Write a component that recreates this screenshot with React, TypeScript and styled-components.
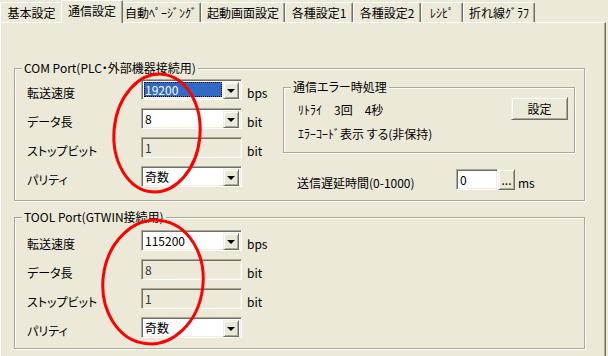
import styled, { createGlobalStyle } from "styled-components";

const face = "#ECE9D8";
const shadow = "#ACA899";
const dark = "#716F64";
const light = "#F1EFE2";

const GlobalStyle = createGlobalStyle`
    html, body {
        margin: 0;
        padding: 0;
        background: ${face};
    }
    body {
        font-family: "Noto Sans CJK JP", "Noto Sans", sans-serif;
        font-size: 12px;
        color: #000;
    }
`;

const Window = styled.div`
    position: relative;
    width: 608px;
    height: 356px;
    overflow: hidden;
    background: ${face};
    font-feature-settings: "palt";
    line-height: 14px;
`;

const TabStrip = styled.div`
    position: relative;
    z-index: 1;
    display: flex;
    align-items: flex-end;
    height: 22px;
`;

const Tab = styled.div<{ $w: number; $active?: boolean }>`
    box-sizing: border-box;
    display: flex;
    align-items: center;
    justify-content: center;
    width: ${p => (p.$active ? p.$w + 4 : p.$w)}px;
    height: ${p => (p.$active ? 23 : 20)}px;
    margin: 0 ${p => (p.$active ? -2 : 0)}px ${p => (p.$active ? -1 : 0)}px;
    padding-bottom: ${p => (p.$active ? 2 : 0)}px;
    background: ${face};
    border-left: 1px solid #fff;
    border-top: 1px solid #fff;
    border-right: 1px solid ${dark};
    border-radius: 2px 2px 0 0;
    box-shadow: inset -1px 0 0 ${shadow};
    white-space: nowrap;
    position: relative;
    z-index: ${p => (p.$active ? 2 : 1)};
`;

const Panel = styled.div`
    box-sizing: border-box;
    width: 606px;
    height: 400px;
    border-top: 1px solid #fff;
    border-left: 1px solid #fff;
    border-right: 1px solid ${dark};
    box-shadow: inset -1px 0 0 ${shadow};
    padding: 45px 0 0 13px;
`;

const Group = styled.div<{ $w: number; $pt: number; $pl: number; $pr?: number; $pb: number }>`
    position: relative;
    box-sizing: border-box;
    width: ${p => p.$w}px;
    border: 1px solid ${shadow};
    box-shadow: inset 1px 1px 0 #fff, 1px 1px 0 #fff;
    padding: ${p => p.$pt}px ${p => p.$pr ?? 0}px ${p => p.$pb}px ${p => p.$pl}px;
    & + & {
        margin-top: 16px;
    }
`;

const Legend = styled.span`
    position: absolute;
    top: -8px;
    left: 7px;
    padding: 0 2px;
    background: ${face};
    white-space: nowrap;
`;

const GroupBody = styled.div`
    display: flex;
`;

const Rows = styled.div`
    display: flex;
    flex-direction: column;
    gap: 8px;
    width: 256px;
`;

const Row = styled.div`
    display: flex;
    align-items: center;
    height: 21px;
`;

const Label = styled.span<{ $w: number }>`
    width: ${p => p.$w}px;
    padding-top: 6px;
    white-space: nowrap;
`;

const Unit = styled.span<{ $gap?: number }>`
    margin-left: ${p => p.$gap ?? 5}px;
    padding-top: 6px;
`;

const Sunken = styled.div<{ $w: number; $disabled?: boolean }>`
    box-sizing: border-box;
    display: flex;
    align-items: stretch;
    width: ${p => p.$w}px;
    height: 21px;
    padding: 2px;
    background: ${p => (p.$disabled ? face : "#fff")};
    color: ${p => (p.$disabled ? "#333" : "#000")};
    border: 1px solid;
    border-color: ${shadow} #fff #fff ${shadow};
    box-shadow: inset 1px 1px 0 ${dark}, inset -1px -1px 0 ${light};
`;

const Value = styled.span<{ $selected?: boolean }>`
    flex: 1;
    display: flex;
    align-items: center;
    padding-left: 1px;
    margin-right: 1px;
    background: ${p => (p.$selected ? "#316AC5" : "transparent")};
    color: ${p => (p.$selected ? "#fff" : "inherit")};
    outline: ${p => (p.$selected ? "1px dotted #000" : "none")};
    outline-offset: -1px;
`;

const RaisedButton = styled.div<{ $w: number; $h: number }>`
    box-sizing: border-box;
    display: flex;
    align-items: center;
    justify-content: center;
    width: ${p => p.$w}px;
    height: ${p => p.$h}px;
    background: ${face};
    border: 1px solid;
    border-color: ${light} ${dark} ${dark} ${light};
    box-shadow: inset 1px 1px 0 #fff, inset -1px -1px 0 ${shadow};
    flex-shrink: 0;
`;

const Arrow = styled.span`
    width: 0;
    height: 0;
    border-left: 4px solid transparent;
    border-right: 4px solid transparent;
    border-top: 4px solid #000;
    margin-top: 1px;
`;

const RightCol = styled.div`
    display: flex;
    flex-direction: column;
    padding-top: 8px;
`;

const ErrorGrid = styled.div`
    display: grid;
    grid-template-columns: 1fr auto;
    grid-template-rows: 23px 14px;
    row-gap: 7px;
`;

const InfoText = styled.span<{ $dy?: number }>`
    padding-top: ${p => p.$dy ?? 0}px;
    white-space: nowrap;
    align-self: ${p => (p.$dy ? "center" : "start")};
`;

const DelayRow = styled.div`
    display: flex;
    align-items: center;
    height: 21px;
    margin-top: 16px;
    padding-left: 14px;
`;

const Overlay = styled.svg`
    position: absolute;
    left: 0;
    top: 0;
    z-index: 5;
    pointer-events: none;
`;

type Field = { label: string; value: string; kind: "combo" | "disabled"; unit: string; selected?: boolean };

const comFields: Field[] = [
    { label: "転送速度", value: "19200", kind: "combo", unit: "bps", selected: true },
    { label: "データ長", value: "8", kind: "combo", unit: "bit" },
    { label: "ストップビット", value: "1", kind: "disabled", unit: "bit" },
    { label: "パリティ", value: "奇数", kind: "combo", unit: "" },
];

const toolFields: Field[] = [
    { label: "転送速度", value: "115200", kind: "combo", unit: "bps" },
    { label: "データ長", value: "8", kind: "disabled", unit: "bit" },
    { label: "ストップビット", value: "1", kind: "disabled", unit: "bit" },
    { label: "パリティ", value: "奇数", kind: "combo", unit: "" },
];

const tabs = [
    { name: "基本設定", w: 63 },
    { name: "通信設定", w: 58, active: true },
    { name: "自動ﾍﾟｰｼﾞﾝｸﾞ", w: 80 },
    { name: "起動画面設定", w: 84 },
    { name: "各種設定1", w: 68 },
    { name: "各種設定2", w: 68 },
    { name: "ﾚｼﾋﾟ", w: 42 },
    { name: "折れ線ｸﾞﾗﾌ", w: 72 },
];

function FieldRows({ fields }: { fields: Field[] }) {
    return (
        <Rows>
            {fields.map((f, i) => (
                <Row key={i}>
                    <Label $w={114}>{f.label}</Label>
                    <Sunken $w={101} $disabled={f.kind === "disabled"}>
                        <Value $selected={f.selected}>{f.value}</Value>
                        {f.kind === "combo" && (
                            <RaisedButton $w={16} $h={17}>
                                <Arrow />
                            </RaisedButton>
                        )}
                    </Sunken>
                    {f.unit && <Unit>{f.unit}</Unit>}
                </Row>
            ))}
        </Rows>
    );
}

export default function App() {
    return (
        <Window>
            <GlobalStyle />
            <TabStrip>
                {tabs.map(t => (
                    <Tab key={t.name} $w={t.w} $active={t.active}>
                        {t.name}
                    </Tab>
                ))}
            </TabStrip>
            <Panel>
                <Group $w={571} $pt={10} $pl={12} $pb={10}>
                    <Legend>COM Port(PLC・外部機器接続用)</Legend>
                    <GroupBody>
                        <FieldRows fields={comFields} />
                        <RightCol>
                            <Group $w={292} $pt={9} $pl={14} $pr={6} $pb={11}>
                                <Legend>通信エラー時処理</Legend>
                                <ErrorGrid>
                                    <InfoText $dy={3}>ﾘﾄﾗｲ　3回　4秒</InfoText>
                                    <RaisedButton $w={57} $h={23}>設定</RaisedButton>
                                    <InfoText>ｴﾗｰｺｰﾄﾞ表示 する(非保持)</InfoText>
                                </ErrorGrid>
                            </Group>
                            <DelayRow>
                                <Label $w={159}>送信遅延時間(0-1000)</Label>
                                <Sunken $w={42}>
                                    <Value>0</Value>
                                </Sunken>
                                <RaisedButton $w={17} $h={21}>...</RaisedButton>
                                <Unit $gap={3}>ms</Unit>
                            </DelayRow>
                        </RightCol>
                    </GroupBody>
                </Group>
                <Group $w={571} $pt={12} $pl={12} $pb={10}>
                    <Legend>TOOL Port(GTWIN接続用)</Legend>
                    <FieldRows fields={toolFields} />
                </Group>
            </Panel>
            <Overlay width={608} height={356} viewBox="0 0 608 356">
                <ellipse cx={157} cy={133} rx={43} ry={59} transform="rotate(5 157 133)" fill="none" stroke="#FF0000" strokeWidth={3} />
                <ellipse cx={153} cy={282} rx={50} ry={62} transform="rotate(7 153 282)" fill="none" stroke="#FF0000" strokeWidth={3} />
            </Overlay>
        </Window>
    );
}
